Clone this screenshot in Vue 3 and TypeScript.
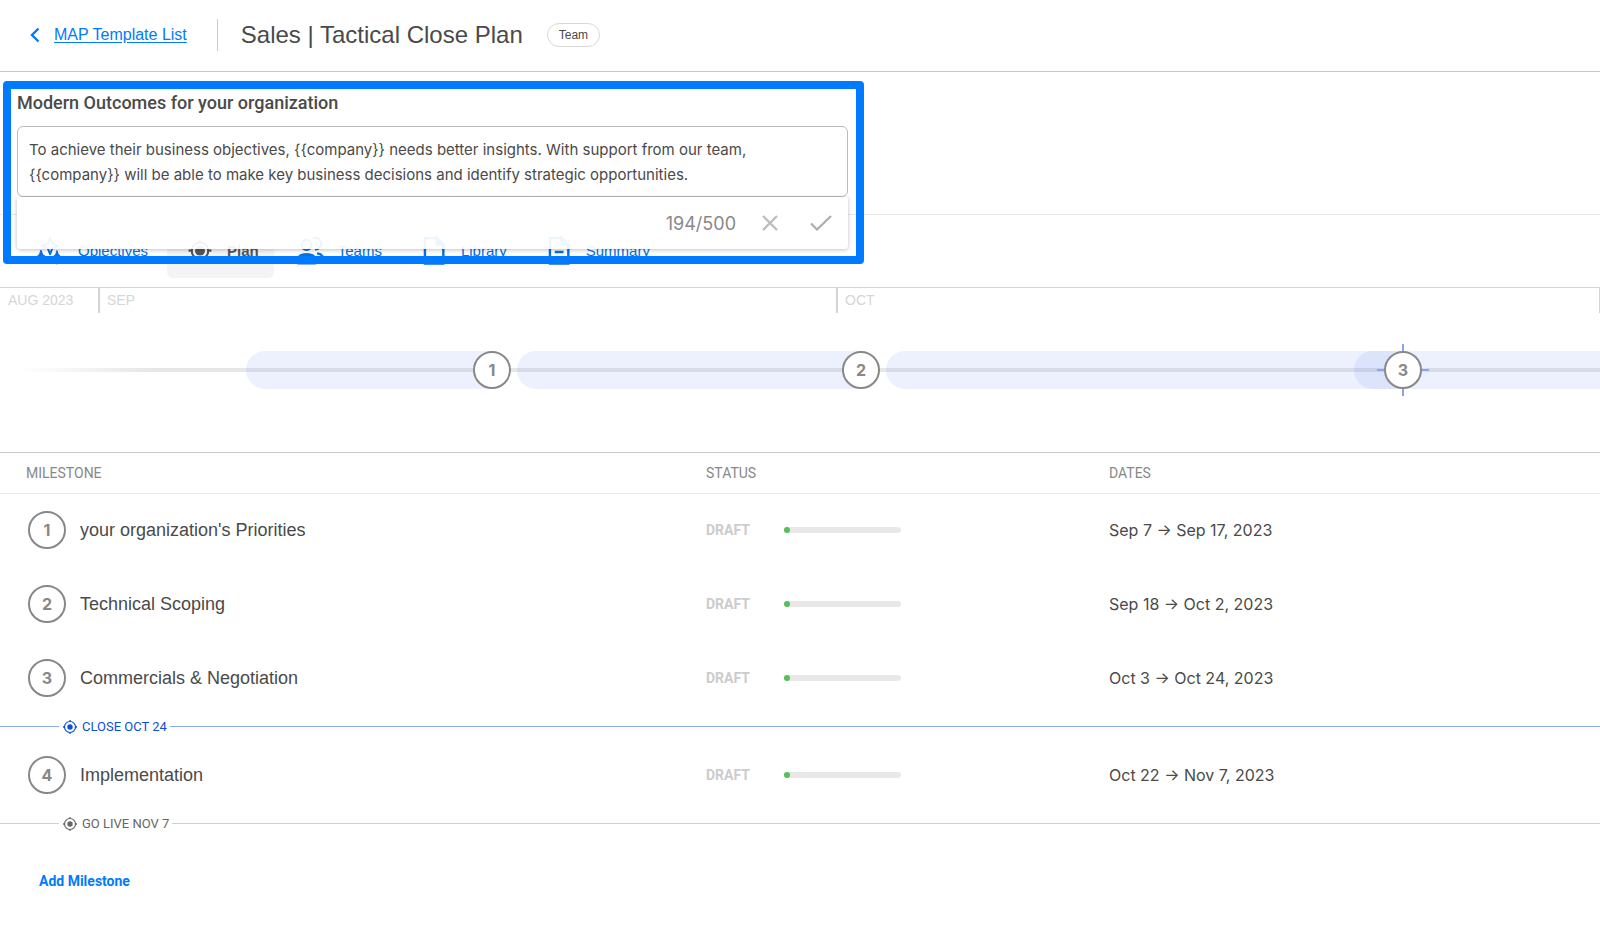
<script setup lang="ts">
import { ref, computed } from 'vue'

interface Milestone {
  id: number
  name: string
  dates: string
  marker?: { label: string; kind: 'close' | 'live' }
}

const outcome = ref(
  'To achieve their business objectives, {{company}} needs better insights. With support from our team, {{company}} will be able to make key business decisions and identify strategic opportunities.'
)
const counter = computed(() => `${outcome.value.length}/500`)

const tabs = ['Objectives', 'Plan', 'Teams', 'Library', 'Summary']
const activeTab = ref('Plan')

const months = [
  { label: 'AUG 2023', width: 98 },
  { label: 'SEP', width: 738 },
  { label: 'OCT', width: 763 },
  { label: '', width: 1 }
]

const spans = [
  { start: 246, end: 511 },
  { start: 517, end: 880 },
  { start: 886, end: 1422 },
  { start: 1354, end: 1640 }
]
const stops = [
  { id: 1, at: 492 },
  { id: 2, at: 861 },
  { id: 3, at: 1403, target: true }
]
const pct = (px: number) => `${(px / 1600) * 100}%`

const milestones: Milestone[] = [
  { id: 1, name: "your organization's Priorities", dates: 'Sep 7 → Sep 17, 2023' },
  { id: 2, name: 'Technical Scoping', dates: 'Sep 18 → Oct 2, 2023' },
  {
    id: 3,
    name: 'Commercials & Negotiation',
    dates: 'Oct 3 → Oct 24, 2023',
    marker: { label: 'CLOSE OCT 24', kind: 'close' }
  },
  {
    id: 4,
    name: 'Implementation',
    dates: 'Oct 22 → Nov 7, 2023',
    marker: { label: 'GO LIVE NOV 7', kind: 'live' }
  }
]
</script>

<template>
  <div class="page">
    <header class="topbar">
      <a class="back" href="#">
        <svg width="10" height="16" viewBox="0 0 10 16" aria-hidden="true">
          <path d="M8.5 1.5 2 8l6.500 6.500" fill="none" stroke="currentColor" stroke-width="2.4" />
        </svg>
        <span>MAP Template List</span>
      </a>
      <div class="rule"></div>
      <h1>Sales | Tactical Close Plan</h1>
      <span class="chip">Team</span>
    </header>

    <section class="outcomes">
      <label for="outcome">Modern Outcomes for your organization</label>
      <div class="editor">
        <textarea id="outcome" v-model="outcome" rows="2" maxlength="500" spellcheck="false"></textarea>
        <div class="editor-bar">
          <span class="count">{{ counter }}</span>
          <button type="button" aria-label="Cancel">
            <svg width="16" height="16" viewBox="0 0 16 16">
              <path d="M1 1l14 14M15 1L1 15" fill="none" stroke="#bdbdbd" stroke-width="2.4" />
            </svg>
          </button>
          <button type="button" aria-label="Save">
            <svg width="22" height="16" viewBox="0 0 22 16">
              <path d="M1 8.500l6 6L21 1" fill="none" stroke="#adadad" stroke-width="2.200" />
            </svg>
          </button>
        </div>
      </div>
      <div class="highlight"></div>
    </section>

    <nav class="tabs">
      <button
        v-for="tab in tabs"
        :key="tab"
        type="button"
        :class="{ active: tab === activeTab }"
        @click="activeTab = tab"
      >
        <svg width="32" height="32" viewBox="0 0 24 24" aria-hidden="true">
          <g v-if="tab === 'Objectives'" fill="none" stroke="currentColor" stroke-width="1.500" stroke-linejoin="round">
            <path d="M11.300 2.800l1.700 4.500 4.500 1.700-4.500 1.700-1.700 4.500-1.700-4.500L5.100 9l4.500-1.700z" />
            <path d="M4.500 12.200l1.200 3.300 3.300 2-3.300 1.200-1.200 3.300-1.200-3.300L.8 17.500l2.500-2zM16.500 12.500l1 3 2.500 2-2.500 1.200-1 3.800-1-3.800-2.500-1.200 2.500-2z" fill="currentColor" stroke-width="0.800" />
          </g>
          <g v-else-if="tab === 'Plan'">
            <circle cx="12" cy="12.500" r="6.200" fill="none" stroke="currentColor" stroke-width="1.500" />
            <circle cx="12" cy="12.500" r="3.700" fill="currentColor" />
            <path d="M12 4v3M12 18v3M3.400 12.500h3M17.600 12.500h3" stroke="currentColor" stroke-width="1.800" />
          </g>
          <g v-else-if="tab === 'Teams'" fill="none" stroke="currentColor" stroke-width="1.700">
            <circle cx="8.700" cy="8.200" r="3.700" />
            <path d="M2.600 22v-3c0-2.800 3-3.700 6.100-3.700s6.100.9 6.100 3.700v3z" />
            <path d="M3.500 16.800c2-2 8.400-2 10.400 0z" fill="currentColor" />
            <path d="M13.500 3.300a4.300 4.300 0 1 1 1.500 8.200M16.500 14.600c2.800.5 4.700 1.600 4.700 4V22" />
          </g>
          <g v-else fill="none" stroke="currentColor" stroke-width="1.800">
            <path d="M5.200 3h8.800l5 5v14.200H5.200z" />
            <path d="M14 3v5h5z" fill="currentColor" />
            <path v-if="tab === 'Summary'" d="M8.800 13.500h6.600M8.800 18h6.600" />
          </g>
        </svg>
        <span>{{ tab }}</span>
      </button>
    </nav>

    <section class="timeline" aria-label="Timeline">
      <div class="months">
        <div v-for="month in months" :key="month.label" :style="{ width: pct(month.width) }">{{ month.label }}</div>
      </div>
      <div class="lane">
        <div class="track"></div>
        <div
          v-for="span in spans"
          :key="span.start"
          class="span"
          :style="{ left: pct(span.start), width: pct(span.end - span.start) }"
        ></div>
        <div
          v-for="stop in stops"
          :key="stop.id"
          class="stop"
          :class="{ target: stop.target }"
          :style="{ left: pct(stop.at) }"
        >
          <span class="badge">{{ stop.id }}</span>
        </div>
      </div>
    </section>

    <table class="milestones">
      <thead>
        <tr>
          <th class="col-name" scope="col">MILESTONE</th>
          <th class="col-status" scope="col">STATUS</th>
          <th scope="col">DATES</th>
        </tr>
      </thead>
      <tbody>
        <template v-for="m in milestones" :key="m.id">
          <tr class="row">
            <td>
              <div class="name"><span class="badge">{{ m.id }}</span>{{ m.name }}</div>
            </td>
            <td>
              <div class="status">
                <span class="draft">DRAFT</span>
                <span class="bar" role="progressbar" aria-valuenow="5" aria-label="Progress"><i></i></span>
              </div>
            </td>
            <td class="dates">{{ m.dates }}</td>
          </tr>
          <tr v-if="m.marker">
            <td colspan="3">
              <div class="marker" :class="m.marker.kind">
                <svg width="16" height="16" viewBox="0 0 16 16" aria-hidden="true">
                  <circle cx="8" cy="8" r="5.500" fill="none" stroke="currentColor" stroke-width="1.200" />
                  <circle cx="8" cy="8" r="2.700" fill="currentColor" />
                  <path d="M8 1v2M8 13v2M1 8h2M13 8h2" stroke="currentColor" stroke-width="1.300" />
                </svg>
                <span>{{ m.marker.label }}</span>
              </div>
            </td>
          </tr>
        </template>
      </tbody>
    </table>

    <button class="add" type="button">Add Milestone</button>
  </div>
</template>

<style>
body {
  margin: 0;
  background: #fff;
}
</style>

<style scoped>
.page {
  font-family: 'Liberation Sans', Arial, sans-serif;
  color: #4a4a4a;
}

.page * {
  box-sizing: border-box;
}

button {
  font: inherit;
  color: inherit;
  background: none;
  border: 0;
  padding: 0;
  cursor: pointer;
}

.topbar {
  display: flex;
  align-items: center;
  height: 72px;
  padding: 0 30px 2px;
  border-bottom: 1px solid #c8c8c8;
}

.back {
  display: flex;
  align-items: center;
  gap: 14px;
  color: #007bff;
  font-size: 16px;
  text-decoration: none;
}

.back span {
  text-decoration: underline;
  text-underline-offset: 2px;
}

.rule {
  width: 1px;
  height: 32px;
  margin: 0 23px 0 30px;
  background: #ccc;
}

h1 {
  margin: 0 24px 0 0;
  font-size: 24px;
  font-weight: 400;
}

.chip {
  padding: 0 11px;
  border: 1px solid #d8d8d8;
  border-radius: 12px;
  font-size: 12px;
  line-height: 22px;
}

.outcomes {
  position: relative;
  z-index: 1;
  height: 143px;
  padding: 21px 17px 0;
  border-bottom: 1px solid #e8e8e8;
}

.outcomes label {
  display: block;
  font-family: Roboto, sans-serif;
  font-size: 18px;
  font-weight: 500;
  line-height: 20px;
}

.editor {
  position: relative;
  width: 831px;
  margin-top: 13px;
}

textarea {
  display: block;
  width: 100%;
  height: 71px;
  padding: 10px 32px 9px 11px;
  border: 1px solid #bbb;
  border-radius: 6px;
  outline: 0;
  resize: none;
  overflow: hidden;
  background: #fff;
  color: inherit;
  font: 15px/25px Inter, sans-serif;
}

.editor-bar {
  position: absolute;
  top: 100%;
  left: 0;
  right: 0;
  display: flex;
  align-items: center;
  justify-content: flex-end;
  height: 52px;
  padding: 0 16px;
  border-radius: 0 0 4px 4px;
  background: rgba(255, 255, 255, 0.93);
  box-shadow: 0 1px 4px rgba(0, 0, 0, 0.25);
}

.editor-bar svg {
  display: block;
}

.count {
  color: #888;
  font-family: Inter, sans-serif;
  font-size: 18px;
}

.editor-bar button {
  margin-left: 26px;
}

.editor-bar button + button {
  margin-left: 32px;
}

.highlight {
  position: absolute;
  top: 9px;
  left: 3px;
  width: 861px;
  height: 183px;
  border: 8px solid #007bff;
  border-radius: 4px;
  pointer-events: none;
}

.tabs {
  display: flex;
  align-items: center;
  gap: 4px;
  height: 73px;
  padding: 0 18px;
  border-bottom: 1px solid #d4d4d4;
}

.tabs button {
  display: flex;
  align-items: center;
  gap: 11px;
  height: 54px;
  padding: 0 15px 2px 17px;
  border-radius: 6px;
  color: #0b6fe0;
  font-size: 15px;
}

.tabs .active {
  background: #f4f4f4;
  color: #555;
  font-weight: 700;
}

.timeline {
  height: 164px;
}

.months {
  display: flex;
  height: 25px;
  overflow: hidden;
  color: #d6d6d6;
  font-size: 14px;
  line-height: 24px;
}

.months div {
  flex: none;
  padding-left: 8px;
}

.months div + div {
  border-left: 2px solid #d4d4d4;
  padding-left: 7px;
}

.lane {
  position: relative;
  height: 52px;
  margin-top: 31px;
  overflow: hidden;
}

.track {
  position: absolute;
  top: 24px;
  left: 20px;
  right: 0;
  height: 4px;
  background: linear-gradient(to right, #fff, #e7e7e7 130px);
}

.span {
  position: absolute;
  top: 7px;
  height: 38px;
  border-radius: 19px;
  background: rgba(73, 117, 235, 0.1);
}

.stop {
  position: absolute;
  top: 0;
  display: flex;
  align-items: center;
  justify-content: center;
  width: 52px;
  height: 52px;
  margin-left: -26px;
}

.target {
  background:
    linear-gradient(#8aa5f0, #8aa5f0) center / 2px 100% no-repeat,
    linear-gradient(#8aa5f0, #8aa5f0) center / 100% 2px no-repeat;
}

.badge {
  display: flex;
  flex: none;
  align-items: center;
  justify-content: center;
  width: 38px;
  height: 38px;
  border: 2px solid #888;
  border-radius: 50%;
  background: #fff;
  color: #888;
  font-family: Inter, sans-serif;
  font-size: 16px;
  font-weight: 700;
}

.milestones {
  width: 100%;
  border-collapse: separate;
  border-spacing: 0;
  border-top: 1px solid #c8c8c8;
  table-layout: fixed;
}

.milestones th {
  height: 41px;
  padding: 0;
  border-bottom: 1px solid #e8e8e8;
  color: #888;
  font-family: Roboto, sans-serif;
  font-size: 14px;
  font-weight: 400;
  text-align: left;
}

.milestones .col-name {
  width: 706px;
  padding-left: 26px;
}

.col-status {
  width: 403px;
}

.milestones td {
  padding: 0;
}

.milestones .row td {
  height: 74px;
  padding-bottom: 2px;
}

.name {
  display: flex;
  align-items: center;
  gap: 14px;
  padding-left: 28px;
  font-size: 18px;
}

.status {
  display: flex;
  align-items: center;
}

.draft {
  width: 78px;
  color: #ccc;
  font-family: Roboto, sans-serif;
  font-size: 14px;
  font-weight: 700;
}

.bar {
  width: 117px;
  height: 6px;
  border-radius: 3px;
  background: #e8e8e8;
}

.bar i {
  display: block;
  width: 6px;
  height: 6px;
  border-radius: 3px;
  background: #56c05a;
}

.milestones .dates {
  font-family: Inter, sans-serif;
  font-size: 16px;
}

.marker {
  display: flex;
  align-items: center;
  height: 23px;
  padding-bottom: 2px;
  font-family: Roboto, sans-serif;
  font-size: 13px;
}

.marker::before,
.marker::after {
  content: '';
  height: 1px;
  background: #d0d0d0;
}

.marker::before {
  width: 59px;
  margin-right: 3px;
}

.marker::after {
  flex: 1;
  margin-left: 3px;
}

.marker span {
  margin-left: 4px;
}

.close {
  color: #0b4fdc;
}

.close::before,
.close::after {
  background: #8aa9f0;
}

.live {
  color: #666;
}

.add {
  margin: 35px 0 0 39px;
  color: #007bff;
  font-family: Roboto, sans-serif;
  font-size: 14px;
  font-weight: 700;
  line-height: 20px;
}
</style>
